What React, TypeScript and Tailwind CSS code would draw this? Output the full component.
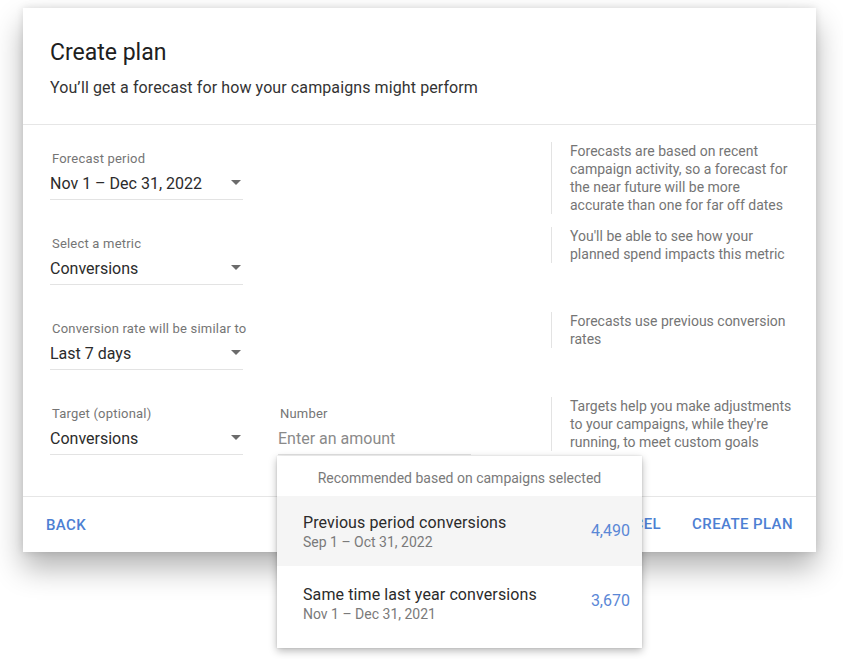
import React from "react";

const Caret = () => (
  <svg width="10" height="5" viewBox="0 0 10 5" className="shrink-0">
    <path d="M0 0 L10 0 L5 5 Z" fill="#6b6b6b" />
  </svg>
);

function SelectField({ label, value }: { label: string; value: string }) {
  return (
    <div className="w-[193px] pt-[9px]">
      <div className="text-[13px] leading-[16px] text-[#757575] pl-[2px] tracking-[0.2px] whitespace-nowrap">{label}</div>
      <div className="mt-[5px] flex items-center justify-between border-b border-[#e3e3e3] pb-[3px]">
        <span className="text-[16px] leading-[24px] text-[#2b2b2b]">{value}</span>
        <span className="mr-[2px] mb-[4px]">
          <Caret />
        </span>
      </div>
    </div>
  );
}

function Help({ lines }: { lines: string[] }) {
  return (
    <div className="ml-auto w-[265px] border-l border-[#e3e3e3] pl-[18px] text-[14px] leading-[18px] text-[#757575]">
      {lines.map((l) => (
        <div key={l} className="whitespace-nowrap">{l}</div>
      ))}
    </div>
  );
}

export default function App() {
  return (
    <div
      className="relative w-[843px] h-[659px] bg-white overflow-hidden"
      style={{ fontFamily: "Roboto, 'Noto Sans', Arial, sans-serif" }}
    >
      <div className="pt-[8px] pl-[23px]">
        <div className="w-[793px] bg-white shadow-[0_16px_28px_rgba(0,0,0,0.3),0_0_8px_rgba(0,0,0,0.12)]">
          {/* Header */}
          <div className="px-[27px] pt-[31px] pb-[26px] border-b border-[#e6e6e6]">
            <div className="text-[23px] leading-[28px] text-[#202020]">Create plan</div>
            <div className="mt-[11px] text-[16px] leading-[20px] text-[#333] tracking-[0.1px]">
              You’ll get a forecast for how your campaigns might perform
            </div>
          </div>
          {/* Body */}
          <div className="pt-[17px] pb-[14px] pl-[27px]">
            <div className="h-[85px] flex items-start">
              <SelectField label="Forecast period" value="Nov 1 – Dec 31, 2022" />
              <Help
                lines={[
                  "Forecasts are based on recent",
                  "campaign activity, so a forecast for",
                  "the near future will be more",
                  "accurate than one for far off dates",
                ]}
              />
            </div>
            <div className="h-[85px] flex items-start">
              <SelectField label="Select a metric" value="Conversions" />
              <Help lines={["You'll be able to see how your", "planned spend impacts this metric"]} />
            </div>
            <div className="h-[85px] flex items-start">
              <SelectField label="Conversion rate will be similar to" value="Last 7 days" />
              <Help lines={["Forecasts use previous conversion", "rates"]} />
            </div>
            <div className="h-[85px] flex items-start">
              <SelectField label="Target (optional)" value="Conversions" />
              <div className="ml-[35px] w-[193px] pt-[9px]">
                <div className="text-[13px] leading-[16px] text-[#757575] pl-[2px] tracking-[0.2px]">Number</div>
                <div className="mt-[5px] border-b border-[#e3e3e3] pb-[3px]">
                  <span className="text-[16px] leading-[24px] text-[#8a8a8a]">Enter an amount</span>
                </div>
              </div>
              <Help
                lines={[
                  "Targets help you make adjustments",
                  "to your campaigns, while they're",
                  "running, to meet custom goals",
                ]}
              />
            </div>
          </div>
          {/* Footer */}
          <div className="h-[56px] border-t border-[#e6e6e6] flex items-center pl-[23px] pr-[23px] text-[15px] font-medium text-[#4d7fd3] tracking-[0.4px]">
            <span className="mt-[2px]">BACK</span>
            <span className="ml-auto">CANCEL</span>
            <span className="ml-[31px]">CREATE PLAN</span>
          </div>
        </div>
      </div>

      {/* Dropdown */}
      <div className="absolute left-[277px] top-[456px] w-[365px] h-[192px] bg-white shadow-[0_3px_8px_rgba(0,0,0,0.28),0_0_2px_rgba(0,0,0,0.12)]">
        <div className="h-[40px] flex items-center justify-center pt-[4px] text-[14px] text-[#7a7a7a]">
          Recommended based on campaigns selected
        </div>
        <div className="h-[70px] bg-[#f5f5f5] flex items-center pl-[26px] pr-[12px]">
          <div className="pt-[1px]">
            <div className="text-[16px] leading-[20px] text-[#2b2b2b] tracking-[0.1px]">Previous period conversions</div>
            <div className="text-[14px] leading-[18px] text-[#7a7a7a]">Sep 1 – Oct 31, 2022</div>
          </div>
          <div className="ml-auto text-[16px] text-[#5a87d6]">4,490</div>
        </div>
        <div className="h-[70px] flex items-center pl-[26px] pr-[12px]">
          <div className="pt-[6px]">
            <div className="text-[16px] leading-[20px] text-[#2b2b2b] tracking-[0.1px]">Same time last year conversions</div>
            <div className="text-[14px] leading-[18px] text-[#7a7a7a]">Nov 1 – Dec 31, 2021</div>
          </div>
          <div className="ml-auto text-[16px] text-[#5a87d6]">3,670</div>
        </div>
      </div>
    </div>
  );
}
